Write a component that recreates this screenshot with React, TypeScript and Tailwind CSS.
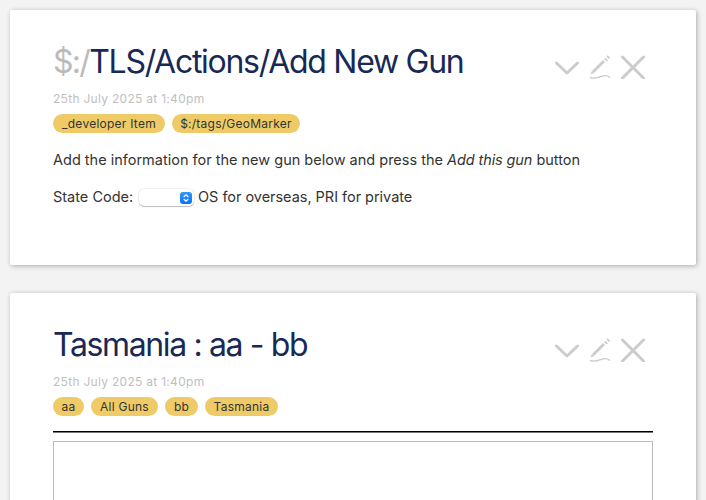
import type { ReactNode } from 'react'

function ChevronIcon() {
  return (
    <svg className="h-6 w-6" viewBox="0 0 24 24" fill="none" stroke="#cccccc" strokeWidth="3" strokeLinecap="round" strokeLinejoin="round">
      <path d="M1.5 8 12 18 22.5 8" />
    </svg>
  )
}

function EditIcon() {
  return (
    <svg className="h-6 w-6" viewBox="0 0 24 24" fill="none" stroke="#cccccc" strokeLinecap="round">
      <path d="M5 17 16 6" strokeWidth="2.8" strokeLinecap="butt" />
      <path d="M2.5 19.6 3.9 15.9 6.2 18.1Z" fill="#cccccc" stroke="none" />
      <path d="M17.2 3.8 18.8 5.4M19.6 1.5 21 2.9" strokeWidth="1.8" />
      <path d="M2.5 22.5C6 24.2 9.5 22.8 13 21.5C16 20.4 19.5 20.3 21.5 22.3" strokeWidth="1.4" />
    </svg>
  )
}

function CloseIcon() {
  return (
    <svg className="h-6 w-6" viewBox="0 0 24 24" fill="none" stroke="#cccccc" strokeWidth="3" strokeLinecap="round">
      <path d="M1.5 2 22.5 23M22.5 2 1.5 23" />
    </svg>
  )
}

function Tag({ className, children }: { className: string; children: ReactNode }) {
  return (
    <span className={`flex h-[19px] items-center justify-center rounded-full bg-[#eecb66] text-[12px] tracking-[0.25px] whitespace-nowrap text-[#333333] ${className}`}>
      {children}
    </span>
  )
}

type TiddlerProps = {
  title: ReactNode
  tags: ReactNode
  className: string
  children: ReactNode
}

function Tiddler({ title, tags, className, children }: TiddlerProps) {
  return (
    <section className={`rounded-[2px] bg-white px-[43px] pt-[30px] shadow-[1px_1px_5px_rgba(0,0,0,0.3)] ${className}`}>
      <div className="flex h-11 items-start justify-between">
        <h2 className="text-[32px] leading-[44px] whitespace-nowrap text-[#182955]">{title}</h2>
        <div className="mt-[15px] mr-2 flex gap-[9px]">
          <button type="button" aria-label="more actions"><ChevronIcon /></button>
          <button type="button" aria-label="edit"><EditIcon /></button>
          <button type="button" aria-label="close"><CloseIcon /></button>
        </div>
      </div>
      <div className="mt-[5px] text-[12px] leading-5 tracking-[0.29px] text-[#c0c0c0]">25th July 2025 at 1:40pm</div>
      <div className="mt-[5px] flex gap-[7px]">{tags}</div>
      {children}
    </section>
  )
}

export default function App() {
  return (
    <main className="h-[500px] overflow-hidden bg-[#f3f3f3] p-[10px] font-['Inter','Liberation_Sans',sans-serif]">
      <Tiddler
        className="h-[255px]"
        title={
          <span className="tracking-[-1.28px]">
            <span className="tracking-[-1.7px] text-[#bbbbbb]">$:/</span>TLS/Actions/Add New Gun
          </span>
        }
        tags={
          <>
            <Tag className="w-[112px]">_developer Item</Tag>
            <Tag className="w-[128px]">$:/tags/GeoMarker</Tag>
          </>
        }
      >
        <p className="mt-4 text-[14.5px] leading-[22px] whitespace-nowrap text-[#333333]">
          Add the information for the new gun below and press the <em className="tracking-[-0.1px]">Add this gun</em> button
        </p>
        <div className="mt-[15px] flex items-center text-[14.5px] leading-[22px] whitespace-nowrap text-[#333333]">
          <span className="w-[86px]">State Code:</span>
          <button
            type="button"
            aria-label="State Code"
            className="mt-px mr-[4px] flex h-[17px] w-[55px] items-center justify-end rounded-[5px] bg-white pr-[2px] shadow-[0_0_0_0.5px_rgba(0,0,0,0.12),0_1px_1px_rgba(0,0,0,0.22)]"
          >
            <span className="flex h-3 w-3 items-center justify-center rounded-[3px] bg-linear-to-b from-[#3297ff] to-[#0073f5]">
              <svg className="h-3 w-3" viewBox="0 0 12 12" fill="none" stroke="white" strokeWidth="1.2" strokeLinecap="round" strokeLinejoin="round">
                <path d="M4 4.7 6 2.8 8 4.7M4 7.3 6 9.2 8 7.3" />
              </svg>
            </span>
          </button>
          <span className="tracking-[-0.03px]">OS for overseas, PRI for private</span>
        </div>
      </Tiddler>

      <Tiddler
        className="mt-7 h-[255px]"
        title={<span className="tracking-[-1.37px]">Tasmania : aa - bb</span>}
        tags={
          <>
            <Tag className="w-[31px]">aa</Tag>
            <Tag className="w-[67px]">All Guns</Tag>
            <Tag className="w-[33px]">bb</Tag>
            <Tag className="w-[73px]">Tasmania</Tag>
          </>
        }
      >
        <hr className="mt-[15px] h-[2px] border-0 border-t border-black bg-[#777777]" />
        <div className="mt-2 h-[120px] border border-[#bbbbbb]" />
      </Tiddler>
    </main>
  )
}
